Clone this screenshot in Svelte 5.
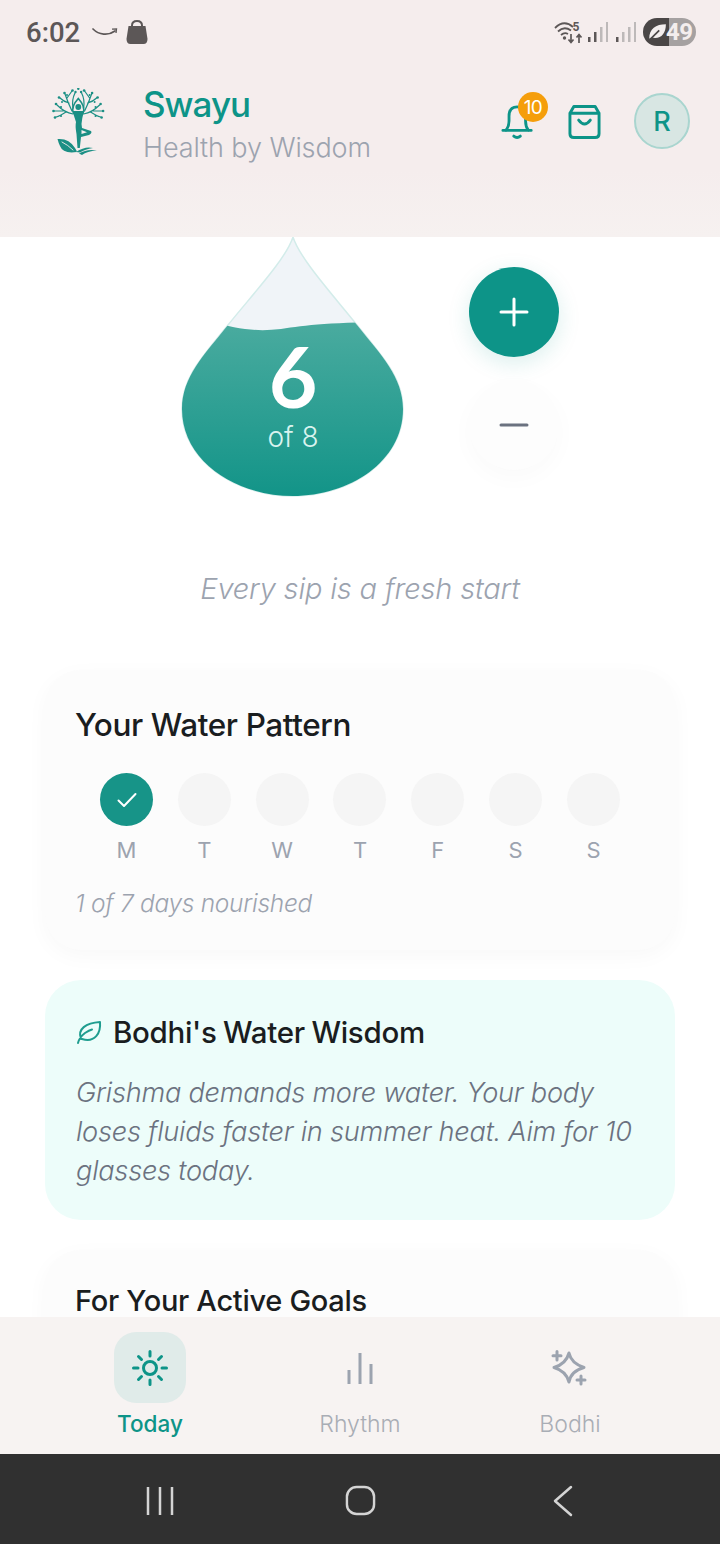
<script>
  const days = [
    { l: 'M', done: true }, { l: 'T' }, { l: 'W' }, { l: 'T' }, { l: 'F' }, { l: 'S' }, { l: 'S' }
  ];
</script>

<div class="screen">
  <header class="top">
    <div class="status">
      <div class="status-left">
        <span class="time">6:02</span>
        <svg width="26" height="14" viewBox="0 0 26 14" fill="none"><path d="M1 4 C7 10 16 11 23 6" stroke="#5c5757" stroke-width="1.7" stroke-linecap="round"/><path d="M20 4.200 L24.500 4 L24 8" stroke="#5c5757" stroke-width="1.300" fill="none"/></svg>
        <svg width="24" height="26" viewBox="0 0 24 26"><path d="M3.500 7 H20.500 L22.500 20 Q22.500 25 18.500 25 H5.500 Q1.500 25 1.500 20Z" fill="#5c5757"/><path d="M7 8 V6.500 Q7 2 12 2 Q17 2 17 6.500 V8" fill="none" stroke="#5c5757" stroke-width="2"/></svg>
      </div>
      <div class="status-right">
        <svg width="30" height="24" viewBox="0 0 30 24" fill="none">
          <path d="M1 8 Q10 -1 19 7" stroke="#5c5757" stroke-width="1.800"/>
          <path d="M4 11.500 Q10 5.500 17 10.500" stroke="#5c5757" stroke-width="1.800"/>
          <path d="M7 15 Q10.500 12 14 14" stroke="#5c5757" stroke-width="1.800"/>
          <circle cx="10.500" cy="18" r="1.700" fill="#5c5757"/>
          <path d="M17 14 V22 M14.500 19.500 L17 22.500 L19.500 19.500 M25 23 V15 M22.500 17.500 L25 14.500 L27.500 17.500" stroke="#5c5757" stroke-width="1.700"/>
          <text x="18.500" y="11" class="five">5</text>
        </svg>
        <svg class="sig1" width="20" height="20" viewBox="0 0 20 20"><rect x="0" y="15" width="2.500" height="5" fill="#5c5757"/><rect x="6" y="10" width="2.500" height="10" fill="#5c5757"/><rect x="12" y="5" width="2.500" height="15" fill="#bdb9b9"/><rect x="18" y="0" width="2" height="20" fill="#bdb9b9"/></svg>
        <svg class="sig2" width="20" height="20" viewBox="0 0 20 20"><rect x="0" y="15" width="2.500" height="5" fill="#5c5757"/><rect x="6" y="10" width="2.500" height="10" fill="#bdb9b9"/><rect x="12" y="5" width="2.500" height="15" fill="#bdb9b9"/><rect x="18" y="0" width="2" height="20" fill="#bdb9b9"/></svg>
        <div class="battery">
          <svg width="20" height="20" viewBox="0 0 18 18"><path d="M2 15 C2 6 8 2 17 2 C17 11 12 16 4 14Z" fill="#f3eeee"/><path d="M1 17.500 L11 7.500" stroke="#4a4646" stroke-width="1.500"/></svg>
          <span>49</span>
        </div>
      </div>
    </div>

    <div class="brand-row">
      <div class="brand">
        <svg class="logo" width="54" height="68" viewBox="0 0 54 68" fill="none" stroke="#1b8f84" stroke-linecap="round">
          <defs>
            <g id="half">
              <g stroke-width="1.200">
                <path d="M21 26 C15 25 10 22 5 17 M14 24 C11 26 8 28 4 29 M20 23 C17 17 15 12 13 6 M17 15 C13 14 10 12 8 10 M15 10 L20 3 M11 23 L2 23 M21 20 Q19.500 12 23 5"/>
              </g>
              <g fill="#1b8f84" stroke="none">
                <circle cx="4" cy="16" r="1.300"/><circle cx="3" cy="29.500" r="1.300"/><circle cx="12.500" cy="5" r="1.300"/><circle cx="7" cy="9.500" r="1.300"/><circle cx="20.500" cy="2.500" r="1.300"/><circle cx="1.500" cy="23" r="1.300"/><circle cx="9" cy="19" r="1.100"/><circle cx="23.500" cy="4" r="1.200"/><circle cx="9" cy="28" r="1.100"/><circle cx="15" cy="7" r="1"/><circle cx="10" cy="14" r="1"/>
              </g>
            </g>
          </defs>
          <use href="#half"/>
          <use href="#half" transform="translate(52.600 0) scale(-1 1)"/>
          <circle cx="26.300" cy="0.800" r="1.200" fill="#1b8f84" stroke="none"/>
          <path d="M21.500 25 Q18.500 19 26.300 10.500 Q34 19 31 25" stroke-width="1.700"/>
          <circle cx="26.300" cy="19" r="2.900" fill="#1b8f84" stroke="none"/>
          <g fill="#1b8f84" stroke="none">
            <path d="M20.500 23 L32 23 Q30 30 29.500 36 L30 40 L39 43 Q40.500 45 37 47 L29 49 L27.800 60 H25.500 L24.500 46 Q23 38 24 34 Q22 28 20.500 23Z"/>
            <path d="M5.500 51 Q17 50 23 60 Q25 63 24.700 64 Q11 66 8 58 Q6.500 55 5.500 51Z"/>
            <path d="M24 64 Q33 58 41 60 Q33 61 28 64.500Z"/>
            <path d="M27 65.500 Q35 60.500 45 62.500 Q35 63 30 67Z"/>
          </g>
          <path d="M29.500 42 L35 44.300 L29.500 46Z" fill="#f5eded" stroke="none"/>
          <path d="M10 54 Q16 57 21 62" stroke="#f5eded" stroke-width="0.900"/>
        </svg>
        <div>
          <div class="name">Swayu</div>
          <div class="tag">Health by Wisdom</div>
        </div>
      </div>
      <div class="actions">
        <div class="bell">
          <svg width="34" height="40" viewBox="0 0 36 40" fill="none" stroke="#0d9488" stroke-width="3" stroke-linecap="round" stroke-linejoin="round">
            <path d="M2 30 H32 M5 30 Q8.500 26 8.500 20 V15 Q8.500 5 17 5 Q26 5 26 15 V20 Q26 26 29 30"/>
            <path d="M13.500 36 Q17 39 20.500 36"/>
          </svg>
          <span class="badge">10</span>
        </div>
        <svg class="bag" width="33" height="36" viewBox="0 0 34 36" fill="none" stroke="#0d9488" stroke-width="3" stroke-linejoin="round" stroke-linecap="round">
          <path d="M6 2 H28 L32 9 V30 Q32 34 28 34 H6 Q2 34 2 30 V9Z M2 9 H32"/>
          <path d="M11 16 Q17 24 23 16"/>
        </svg>
        <div class="avatar">R</div>
      </div>
    </div>
  </header>

  <main class="content">
    <section class="hero">
      <div class="drop">
        <svg width="224" height="261" viewBox="0 0 224 261">
          <defs>
            <linearGradient id="water" x1="0" y1="85" x2="0" y2="260" gradientUnits="userSpaceOnUse">
              <stop offset="0" stop-color="#4aab9f"/>
              <stop offset="1" stop-color="#129488"/>
            </linearGradient>
            <clipPath id="dropClip">
              <path d="M112 0 C105 22 71 58 47 88 C23 118 1 140 1 172 C1 225 56 259 112 259 C168 259 222 225 222 172 C222 140 200 118 176 88 C152 58 119 22 112 0Z"/>
            </clipPath>
          </defs>
          <path d="M112 0 C105 22 71 58 47 88 C23 118 1 140 1 172 C1 225 56 259 112 259 C168 259 222 225 222 172 C222 140 200 118 176 88 C152 58 119 22 112 0Z" fill="#f0f4f8" stroke="#d3ecea" stroke-width="1.500"/>
          <g clip-path="url(#dropClip)">
            <path d="M30 84 C55 92 75 95 100 92 C125 88 150 85 224 85 V262 H0 V84Z" fill="url(#water)"/>
          </g>
        </svg>
        <div class="count">
          <div class="big">6</div>
          <div class="of">of 8</div>
        </div>
      </div>
      <div class="buttons">
        <div class="btn plus">
          <svg width="30" height="30" viewBox="0 0 30 30"><path d="M15 2 V28 M2 15 H28" stroke="#fff" stroke-width="3" stroke-linecap="round"/></svg>
        </div>
        <div class="btn minus">
          <svg width="30" height="6" viewBox="0 0 30 6"><path d="M2 3 H28" stroke="#6b7280" stroke-width="3" stroke-linecap="round"/></svg>
        </div>
      </div>
    </section>

    <p class="sip">Every sip is a fresh start</p>

    <section class="card pattern">
      <h2 class="t1">Your Water Pattern</h2>
      <div class="days">
        {#each days as d}
          <div class="day">
            <div class="dot" class:done={d.done}>
              {#if d.done}
                <svg width="22" height="18" viewBox="0 0 22 18" fill="none"><path d="M2.500 9.500 L8 15 L19.500 3" stroke="#fff" stroke-width="2" stroke-linecap="round" stroke-linejoin="round"/></svg>
              {/if}
            </div>
            <span>{d.l}</span>
          </div>
        {/each}
      </div>
      <p class="note">1 of 7 days nourished</p>
    </section>

    <section class="wisdom">
      <h2 class="t2">
        <svg width="26" height="26" viewBox="0 0 26 26" fill="none" stroke="#1f9d8f" stroke-width="2" stroke-linecap="round" stroke-linejoin="round"><path d="M2 24 C3 20 5 17 9 14 M5 20 C1 10 10 4 24 3 C25 14 19 24 6 20Z M9 14 C12 12 14 11 16 10.500"/></svg>
        Bodhi's Water Wisdom
      </h2>
      <p>Grishma demands more water. Your body loses fluids faster in summer heat. Aim for 10 glasses today.</p>
    </section>

    <section class="card goals">
      <h2 class="t3">For Your Active Goals</h2>
    </section>
  </main>

  <nav class="tabs">
    <div class="tab active">
      <div class="tile">
        <svg width="38" height="38" viewBox="0 0 38 38" fill="none" stroke="#0d9488" stroke-width="3" stroke-linecap="round"><circle cx="19" cy="19" r="6.500"/><path d="M19 2.500 V7 M19 31 V35.500 M2.500 19 H7 M31 19 H35.500 M7.500 7.500 L10.500 10.500 M27.500 27.500 L30.500 30.500 M7.500 30.500 L10.500 27.500 M27.500 10.500 L30.500 7.500"/></svg>
      </div>
      <span>Today</span>
    </div>
    <div class="tab">
      <div class="tile">
        <svg width="30" height="34" viewBox="0 0 30 34" fill="none" stroke="#9ca3af" stroke-width="3"><path d="M4 19 V33 M15 2 V33 M26 13 V33"/></svg>
      </div>
      <span>Rhythm</span>
    </div>
    <div class="tab">
      <div class="tile">
        <svg width="38" height="38" viewBox="0 0 38 38" fill="none" stroke="#9ca3af" stroke-width="3" stroke-linejoin="round" stroke-linecap="round"><path d="M18 4 Q20 14 33 18.500 Q20 22 18 33 Q15 22 3 18.500 Q15 15 18 4Z"/><path d="M6 2.500 V11 M2 6.800 H10 M30 27 V35 M26 31 H34"/></svg>
      </div>
      <span>Bodhi</span>
    </div>
  </nav>

  <div class="system">
    <svg width="30" height="30" viewBox="0 0 30 30"><path d="M3 1 V29 M15 1 V29 M27 1 V29" stroke="#d4d4d4" stroke-width="2.500"/></svg>
    <svg class="home" width="32" height="32" viewBox="0 0 32 32" fill="none"><rect x="2" y="2" width="28" height="28" rx="10" stroke="#d4d4d4" stroke-width="2.500"/></svg>
    <svg class="back" width="22" height="32" viewBox="0 0 22 32" fill="none"><path d="M19 2 L3 16 L19 30" stroke="#d4d4d4" stroke-width="2.500" stroke-linecap="round" stroke-linejoin="round"/></svg>
  </div>
</div>

<style>
  :global(body) { margin: 0; background: #fff; }
  .screen {
    width: 720px; height: 1544px; display: flex; flex-direction: column; overflow: hidden;
    font-family: "Inter", "Noto Sans", sans-serif; color: #1a1d1f;
  }
  .top { height: 237px; flex: none; background: linear-gradient(#f5eded 0, #f5eded 170px, #f6f1f0 237px); box-sizing: border-box; }
  .status { height: 64px; display: flex; justify-content: space-between; align-items: center; padding: 0 24px 0 26px; }
  .status-left { display: flex; align-items: center; gap: 7px; }
  .time { font: 500 27.500px "Roboto", sans-serif; color: #5c5757; margin-right: 5px; }
  .status-right { display: flex; align-items: center; }
  .sig1 { margin-left: 4px; }
  .sig2 { margin-left: 8px; }
  .five { font: 700 12px "Roboto", sans-serif; fill: #5c5757; }
  .battery {
    width: 53px; height: 28px; border-radius: 14px; display: flex; align-items: center; margin-left: 7px;
    background: linear-gradient(90deg, #4a4646 0 26px, #a5a1a1 26px);
    padding-left: 4px; box-sizing: border-box;
  }
  .battery span { font: 700 24px "Roboto", sans-serif; color: #f3eeee; letter-spacing: -0.500px; margin-left: -1px; }
  .brand-row { display: flex; justify-content: space-between; align-items: flex-start; padding: 24px 30px 0 52px; }
  .brand { display: flex; gap: 37px; align-items: flex-start; }
  .name { font-size: 35px; font-weight: 500; color: #0d9488; line-height: 40px; letter-spacing: -1px; margin-top: -4px; }
  .tag { font-size: 27px; font-weight: 300; color: #9ca3af; line-height: 32px; margin-top: 8px; letter-spacing: -0.100px; }
  .actions { display: flex; align-items: center; gap: 33px; margin-top: 5px; }
  .bell { position: relative; width: 34px; height: 40px; }
  .badge {
    position: absolute; left: 17px; top: -9px; width: 30px; height: 30px; border-radius: 50%;
    background: #f59e0b; color: #fff; font-size: 19px; font-weight: 400; display: flex; align-items: center; justify-content: center; letter-spacing: -0.500px;
  }
  .bag { margin-top: 1px; }
  .avatar {
    width: 56px; height: 56px; box-sizing: border-box; border-radius: 50%; background: #d8e6e3; border: 2px solid #a9d5cf;
    color: #0d9488; font-size: 27px; font-weight: 500; display: flex; align-items: center; justify-content: center;
  }
  .content { flex: 1; min-height: 0; overflow: hidden; background: #fff; display: flex; flex-direction: column; }
  .hero { display: flex; padding-left: 181px; gap: 64px; flex: none; }
  .drop { position: relative; width: 224px; height: 261px; }
  .drop svg { display: block; }
  .count { position: absolute; left: 0; right: 0; top: 106px; text-align: center; }
  .big { font: 700 84px/66px "Lato", sans-serif; color: #fff; }
  .of { font-size: 28px; font-weight: 300; color: #d9f3ef; line-height: 32px; margin-top: 12px; }
  .buttons { display: flex; flex-direction: column; align-items: center; gap: 23px; padding-top: 30px; }
  .btn { width: 90px; height: 90px; border-radius: 50%; display: flex; align-items: center; justify-content: center; }
  .plus { background: #0d9488; box-shadow: 0 6px 22px rgba(13,148,136,.15); }
  .minus { background: #fdfdfd; box-shadow: 0 8px 24px rgba(0,0,0,.025); }
  .sip { margin: 74px 0 0; text-align: center; font-size: 29px; font-style: italic; font-weight: 300; color: #9ca3af; line-height: 34px; letter-spacing: -0.200px; }
  .card {
    margin: 0 45px; background: #fcfcfc; border-radius: 36px; box-shadow: 0 6px 22px rgba(0,0,0,.03); flex: none; box-sizing: border-box; padding: 0 30px;
  }
  h2 { margin: 0; font-size: 30px; font-weight: 500; line-height: 36px; color: #1a1d1f; }
  .t1 { font-size: 31.500px; letter-spacing: -0.400px; }
  .t2 { font-size: 29.500px; letter-spacing: -0.300px; word-spacing: -1px; }
  .t3 { font-size: 29px; letter-spacing: -0.300px; }
  .pattern { margin-top: 64px; height: 280px; padding-top: 37px; }
  .days { display: flex; justify-content: space-between; margin-top: 30px; padding: 0 25px; }
  .day { display: flex; flex-direction: column; align-items: center; width: 53px; }
  .dot { width: 53px; height: 53px; border-radius: 50%; background: #f5f5f5; display: flex; align-items: center; justify-content: center; }
  .dot.done { background: #179488; }
  .day span { font-size: 22px; font-weight: 400; color: #9ca3af; line-height: 26px; margin-top: 11px; }
  .note { margin: 25px 0 0; font-size: 24.500px; font-style: italic; font-weight: 300; color: #9ca3af; line-height: 30px; letter-spacing: -0.300px; }
  .wisdom { margin: 30px 45px 0; height: 240px; flex: none; box-sizing: border-box; padding: 34px 30px 0 31px; background: #edfdfa; border-radius: 36px; }
  .wisdom h2 { display: flex; align-items: center; gap: 11px; }
  .wisdom p { margin: 23px 0 0; font-size: 27.200px; font-style: italic; font-weight: 300; line-height: 39px; color: #6b7280; letter-spacing: -0.250px; }
  .goals { margin-top: 30px; height: 200px; padding-top: 33px; }
  .tabs { height: 137px; flex: none; background: #f7f3f2; display: flex; padding: 15px 45px 0; box-sizing: border-box; }
  .tab { width: 210px; display: flex; flex-direction: column; align-items: center; }
  .tile { width: 72px; height: 71px; border-radius: 22px; display: flex; align-items: center; justify-content: center; }
  .active .tile { background: #e0ebe9; }
  .tab span { font-size: 23px; color: #a9adb5; font-weight: 300; line-height: 28px; margin-top: 7px; }
  .active span { color: #0d9488; font-weight: 500; font-size: 22.500px; }
  .system { height: 90px; flex: none; background: #303030; display: flex; align-items: center; padding: 3px 0 0 145px; box-sizing: border-box; }
  .home { width: 31px; height: 31px; margin-left: 170px; }
  .back { margin-left: 176px; }
</style>
